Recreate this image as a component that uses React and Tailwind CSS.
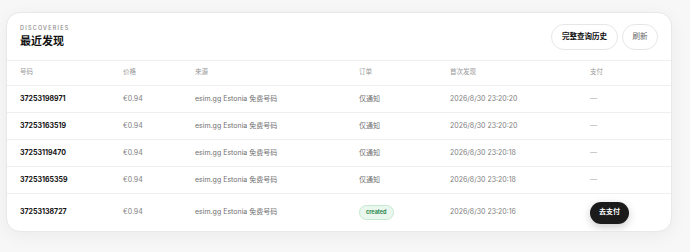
import React from 'react';

const rows = [
  { number: '37253198971', price: '€0.94', source: 'esim.gg Estonia 免费号码', order: '仅通知', first: '2026/8/30 23:20:20', pay: null },
  { number: '37253163519', price: '€0.94', source: 'esim.gg Estonia 免费号码', order: '仅通知', first: '2026/8/30 23:20:20', pay: null },
  { number: '37253119470', price: '€0.94', source: 'esim.gg Estonia 免费号码', order: '仅通知', first: '2026/8/30 23:20:18', pay: null },
  { number: '37253165359', price: '€0.94', source: 'esim.gg Estonia 免费号码', order: '仅通知', first: '2026/8/30 23:20:18', pay: null },
  { number: '37253138727', price: '€0.94', source: 'esim.gg Estonia 免费号码', order: 'created', first: '2026/8/30 23:20:16', pay: '去支付' }
];

const cols = 'grid grid-cols-[103px_72px_164px_91px_140px_1fr] px-[13px] items-center';

const App = () => {
  return (
    <div
      className="w-[690px] h-[252px] bg-[#f7f7f7] overflow-hidden pt-[12px] pl-[6px]"
      style={{ fontFamily: 'Inter, "Noto Sans CJK SC", sans-serif' }}
    >
      <div className="w-[666px] bg-white border border-[#e8e8e8] rounded-[14px] shadow-[0_4px_18px_rgba(0,0,0,0.05)] overflow-hidden">
        {/* Header */}
        <div className="h-[48px] flex items-center justify-between pl-[13px] pr-[13px] border-b border-[#efefef]">
          <div>
            <div className="text-[5.5px] tracking-[0.22em] text-[#8a8a8a] font-medium leading-none">DISCOVERIES</div>
            <h1 className="text-[11px] font-bold text-[#111] leading-none mt-[5px]">最近发现</h1>
          </div>
          <div className="flex items-center gap-[4px]">
            <button className="h-[26px] px-[10px] rounded-full border border-[#e6e6e6] bg-white text-[7.5px] font-bold text-[#111]">
              完整查询历史
            </button>
            <button className="h-[26px] w-[36px] rounded-full border border-[#e6e6e6] bg-white text-[7.5px] text-[#666]">
              刷新
            </button>
          </div>
        </div>

        {/* Column headers */}
        <div className={`${cols} h-[25px] border-b border-[#efefef] text-[6.5px] text-[#999]`}>
          <div>号码</div>
          <div>价格</div>
          <div>来源</div>
          <div>订单</div>
          <div>首次发现</div>
          <div>支付</div>
        </div>

        {/* Rows */}
        {rows.map((row) => (
          <div
            key={row.number}
            className={`${cols} text-[7px] ${row.pay ? 'h-[37px]' : 'h-[27px] border-b border-[#efefef]'}`}
          >
            <div className="font-bold text-[#111]">{row.number}</div>
            <div className="text-[#808080]">{row.price}</div>
            <div className="text-[#707070]">{row.source}</div>
            <div>
              {row.order === 'created' ? (
                <span className="inline-flex items-center h-[15px] px-[6px] rounded-full bg-[#eaf7ee] border border-[#c4e8d0] text-[5.5px] font-bold text-[#2d8a4e]">
                  created
                </span>
              ) : (
                <span className="text-[#707070]">{row.order}</span>
              )}
            </div>
            <div className="text-[#808080]">{row.first}</div>
            <div>
              {row.pay ? (
                <button className="h-[22px] w-[39px] rounded-full bg-[#1b1b1b] text-white text-[7px] font-bold shadow-[0_3px_8px_rgba(0,0,0,0.2)]">
                  {row.pay}
                </button>
              ) : (
                <span className="text-[#aaa]">—</span>
              )}
            </div>
          </div>
        ))}
      </div>
    </div>
  );
};

export default App;
